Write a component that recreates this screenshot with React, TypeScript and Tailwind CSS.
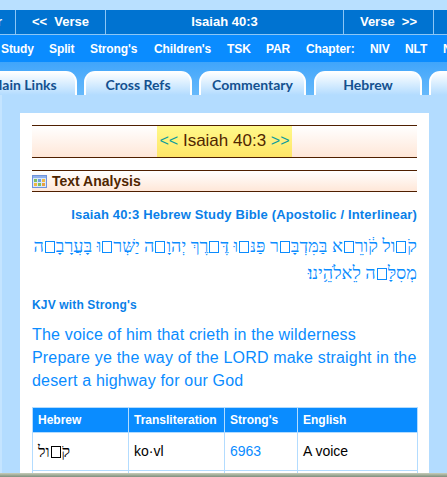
import React from 'react';

const sans = { fontFamily: '"Liberation Sans", Arial, sans-serif' };

const Tofu = () => (
  <span className="inline-block w-[10px] h-[12px] border border-current align-[-1px] mx-[1px]" />
);

const navLinks = [
  { label: 'Study', w: 'w-[48px]' },
  { label: 'Split', w: 'w-[41px]' },
  { label: "Strong's", w: 'w-[64px]' },
  { label: "Children's", w: 'w-[73px]' },
  { label: 'TSK', w: 'w-[39px]' },
  { label: 'PAR', w: 'w-[40px]' },
  { label: 'Chapter:', w: 'w-[64px]' },
  { label: 'NIV', w: 'w-[35px]' },
  { label: 'NLT', w: 'w-[38px]' },
  { label: 'NASB', w: 'w-[40px]' },
];

const tabs = [
  { label: 'Main Links', w: 'w-[108px]', ml: '-ml-[31px]' },
  { label: 'Cross Refs', w: 'w-[108px]', ml: 'ml-[7px]' },
  { label: 'Commentary', w: 'w-[107px]', ml: 'ml-[7px]' },
  { label: 'Hebrew', w: 'w-[108px]', ml: 'ml-[8px]' },
  { label: 'Lexicon', w: 'w-[108px]', ml: 'ml-[7px]' },
];

export default function App() {
  return (
    <div className="w-[447px] h-[477px] overflow-hidden bg-[#b3dcff] flex flex-col" style={sans}>
      <div className="h-[10px] shrink-0 bg-[#b9e0ff]" />

      {/* verse bar */}
      <div className="h-[25px] shrink-0 flex bg-[#0073d1] border-b border-[#8cc6f5] text-white text-[13px] font-bold leading-[24px] whitespace-nowrap">
        <div className="w-[16px] border-r border-[#8cc6f5] flex justify-end pr-[13px]">Chapter</div>
        <div className="w-[90px] border-r border-[#8cc6f5] text-center">&lt;&lt;&nbsp; Verse</div>
        <div className="w-[238px] border-r border-[#8cc6f5] text-center">Isaiah 40:3</div>
        <div className="w-[90px] border-r border-[#8cc6f5] text-center">Verse &nbsp;&gt;&gt;</div>
      </div>

      {/* links bar */}
      <div className="h-[27px] shrink-0 flex items-center pl-[1px] bg-[#0a8cff] text-white text-[12px] font-bold tracking-[-0.1px] whitespace-nowrap">
        {navLinks.map((l) => (
          <span key={l.label} className={`${l.w} shrink-0`}>{l.label}</span>
        ))}
      </div>

      {/* tabs */}
      <div className="h-[33px] shrink-0 flex items-end bg-gradient-to-b from-[#3fa5fb] to-[#66b9fb] whitespace-nowrap">
        {tabs.map((t) => (
          <div
            key={t.label}
            className={`${t.w} ${t.ml} shrink-0 h-[24px] rounded-t-[11px] border-t border-x-2 border-white border-b-0 bg-gradient-to-b from-white to-[#b3dcff] text-center text-[#14518f] text-[14px] font-bold leading-[26px]`}
            style={{ fontFamily: 'Lato, sans-serif' }}
          >
            {t.label}
          </div>
        ))}
      </div>

      {/* content */}
      <div className="flex-1 min-h-0 pt-[18px] pl-[18px] pr-[18px] border-l-2 border-[#c4e4ff] flex">
        <div className="w-[409px] shrink-0 bg-white px-[12px] pt-[12px] overflow-hidden">
          <div className="h-[33px] border-y border-[#4f1f00] bg-gradient-to-b from-white to-[#ffe7d8] flex justify-center">
            <div className="w-[135px] bg-gradient-to-b from-[#fff98a] to-[#ffe566] text-center text-[17px] leading-[30px] text-[#4f2500] whitespace-nowrap">
              <span className="text-[#0e9c9c] text-[16px]">&lt;&lt;</span> Isaiah 40:3 <span className="text-[#0e9c9c] text-[16px]">&gt;&gt;</span>
            </div>
          </div>

          <div className="mt-[12px] h-[22px] border-y border-[#4f1f00] bg-gradient-to-b from-white to-[#ffe7d8] flex items-center">
            <svg width="15" height="13" viewBox="0 0 15 13" className="mr-[5px]">
              <rect x="0.5" y="0.5" width="14" height="12" fill="#dbe8fb" stroke="#6f93dc" />
              <rect x="1" y="1" width="13" height="2" fill="#8fb0ea" />
              <rect x="2" y="4" width="3" height="3" fill="#7fbf5f" />
              <rect x="6" y="4" width="3" height="3" fill="#6fa0e0" />
              <rect x="10" y="4" width="3" height="3" fill="#f0b840" />
              <rect x="2" y="8" width="3" height="3" fill="#f0b840" />
              <rect x="6" y="8" width="3" height="3" fill="#7fbf5f" />
              <rect x="10" y="8" width="3" height="3" fill="#e8a040" />
            </svg>
            <span className="text-[14px] font-bold text-[#4f2500]">Text Analysis</span>
          </div>

          <div className="mt-[16px] text-right text-[13px] font-bold leading-[14px] tracking-[0.15px] text-[#0a7fe8] whitespace-nowrap">
            Isaiah 40:3 Hebrew Study Bible (Apostolic / Interlinear)
          </div>

          <div dir="rtl" className="mt-[11px] text-[18px] leading-[27px] text-[#0a8cff] whitespace-nowrap" style={{ fontFamily: '"Liberation Serif", "DejaVu Sans", serif' }}>
            <div>
              קֹ<Tofu />ול קֹ֔ורֵ<Tofu />א בַּמִּדְבָּ<Tofu />ר פַּנּ<Tofu />וּ דֶּ<Tofu />רֶךְ יְהוָ<Tofu />ה יַשְּׁר<Tofu />וּ בָּעֲרָבָ<Tofu />ה
            </div>
            <div>
              מְסִלָּ<Tofu />ה לֵאלֹהֵ֥ינוּ׃
            </div>
          </div>

          <div className="mt-[11px] text-[12px] font-bold leading-[14px] tracking-[0.15px] text-[#0a7fe8]">KJV with Strong's</div>

          <div className="mt-[11px] text-[16px] leading-[23px] tracking-[0.18px] text-[#0a8cff] whitespace-nowrap">
            The voice of him that crieth in the wilderness<br />
            Prepare ye the way of the LORD make straight in the<br />
            desert a highway for our God
          </div>

          <table className="mt-[15px] w-[385px] table-fixed border-collapse text-[14px]">
            <colgroup>
              <col className="w-[96px]" />
              <col className="w-[96px]" />
              <col className="w-[73px]" />
              <col className="w-[120px]" />
            </colgroup>
            <thead>
              <tr className="h-[25px] bg-[#0a8cff] text-white text-[12px] font-bold text-left">
                <th className="border border-[#b3dcff] px-[5px]">Hebrew</th>
                <th className="border border-[#b3dcff] px-[5px]">Transliteration</th>
                <th className="border border-[#b3dcff] px-[5px]">Strong's</th>
                <th className="border border-[#b3dcff] px-[5px]">English</th>
              </tr>
            </thead>
            <tbody>
              <tr className="h-[38px]">
                <td className="border border-[#b3dcff] px-[5px] text-left text-[16px] text-black" style={{ fontFamily: '"Liberation Serif", serif' }}>
                  <span dir="rtl">קֹ<Tofu />ול</span>
                </td>
                <td className="border border-[#b3dcff] px-[5px]">ko·vl</td>
                <td className="border border-[#b3dcff] px-[5px] text-[#0a8cff]">6963</td>
                <td className="border border-[#b3dcff] px-[5px]">A voice</td>
              </tr>
              <tr className="h-[38px]">
                <td className="border border-[#b3dcff]" />
                <td className="border border-[#b3dcff]" />
                <td className="border border-[#b3dcff]" />
                <td className="border border-[#b3dcff]" />
              </tr>
            </tbody>
          </table>
        </div>
      </div>

      <div className="h-[4px] shrink-0 bg-gradient-to-b from-[#c9cdb8] to-[#7e8f7e]" />
    </div>
  );
}
